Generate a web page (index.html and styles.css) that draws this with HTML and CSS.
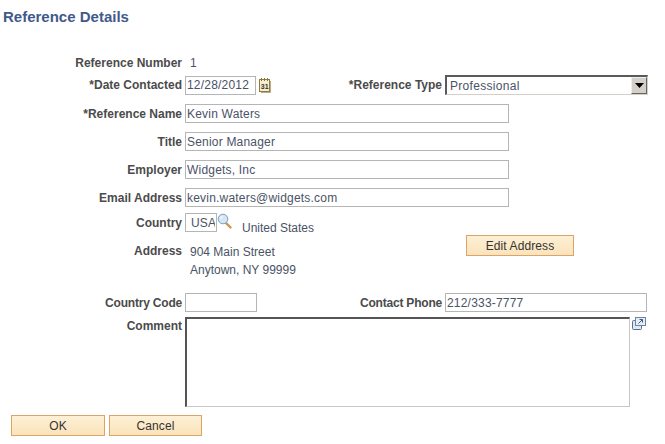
FILE: index.html
```html
<!DOCTYPE html>
<html lang="en">
<head>
    <meta charset="UTF-8">
    <title>Reference Details</title>
    <link rel="stylesheet" href="styles.css">
</head>
<body>
    <h1>Reference Details</h1>

    <div class="row row-number">
        <span class="label">Reference Number</span>
        <span class="value">1</span>
    </div>

    <div class="row split row-date">
        <span class="label">*Date Contacted</span>
        <div class="field-group">
            <input class="input input-date" type="text" value="12/28/2012">
            <svg class="icon-calendar" width="13" height="16" viewBox="0 0 13 16">
                <rect x="1.500" y="2.500" width="10" height="12" fill="#f7efca" stroke="#8d7c48"/>
                <path d="M12.500 4v11.500H3" fill="none" stroke="#bcae7c"/>
                <path d="M3.500 1v3M6.500 1v3M9.500 1v3" stroke="#85743f"/>
                <text x="2.800" y="11.500" class="icon-text">31</text>
            </svg>
        </div>
        <span class="label">*Reference Type</span>
        <div class="select">
            <span>Professional</span>
            <span class="select-arrow">
                <svg width="9" height="5" viewBox="0 0 9 5"><path d="M0 0h9L4.500 5z" fill="#000"/></svg>
            </span>
        </div>
    </div>

    <div class="row row-text">
        <span class="label">*Reference Name</span>
        <input class="input input-wide" type="text" value="Kevin Waters">
    </div>
    <div class="row row-text">
        <span class="label">Title</span>
        <input class="input input-wide" type="text" value="Senior Manager">
    </div>
    <div class="row row-text">
        <span class="label">Employer</span>
        <input class="input input-wide" type="text" value="Widgets, Inc">
    </div>
    <div class="row row-text">
        <span class="label">Email Address</span>
        <input class="input input-wide" type="text" value="kevin.waters@widgets.com">
    </div>

    <div class="row row-country">
        <span class="label label-country">Country</span>
        <input class="input input-country" type="text" value="USA">
        <svg class="icon-search" width="15" height="16" viewBox="0 0 15 16">
            <path d="M9 10l4.500 4.500" stroke="#c9974e" stroke-width="2.400" stroke-linecap="round"/>
            <circle cx="6" cy="6" r="4.800" fill="#d3e6f5" stroke="#7f9db8"/>
            <path d="M3.500 6a2.500 2.500 0 0 1 2.500-2.500" fill="none" stroke="#fff"/>
        </svg>
        <span class="value country-name">United States</span>
    </div>

    <div class="row split-address">
        <span class="label">Address</span>
        <div class="address">
            <div>904 Main Street</div>
            <div>Anytown, NY 99999</div>
        </div>
        <button class="btn btn-edit">Edit Address</button>
    </div>

    <div class="row split row-phone">
        <span class="label label-tight">Country Code</span>
        <div class="field-group">
            <input class="input input-code" type="text">
        </div>
        <span class="label label-tight">Contact Phone</span>
        <input class="input input-phone" type="text" value="212/333-7777">
    </div>

    <div class="row row-comment">
        <span class="label label-comment">Comment</span>
        <textarea class="comment"></textarea>
        <svg class="icon-expand" width="16" height="15" viewBox="0 0 16 15">
            <rect x="1.500" y="4.500" width="9" height="9" rx="1" fill="#dfe8f2" stroke="#5a6f94"/>
            <rect x="4.500" y="1.500" width="10" height="8" fill="#e6eef5" stroke="#6d83ab"/>
            <path d="M7.500 7.500l4-4M8.500 3.500h3v3" fill="none" stroke="#46597c"/>
        </svg>
    </div>

    <div class="actions">
        <button class="btn btn-ok">OK</button>
        <button class="btn btn-cancel">Cancel</button>
    </div>
</body>
</html>
```

FILE: styles.css
```css
body {
    font-family: "Liberation Sans", Arial, sans-serif;
    font-size: 12px;
    color: #4a5266;
    background-color: #fff;
    margin: 0;
}

h1 {
    font-size: 15px;
    font-weight: bold;
    color: #3f5a8a;
    line-height: 16px;
    margin: 0;
    padding: 9px 0 0 3px;
}

.row {
    display: flex;
    column-gap: 3px;
}

.split {
    display: grid;
    grid-template-columns: 182px 160px 94px 1fr;
    column-gap: 3px;
    align-items: center;
}

.label {
    flex: 0 0 182px;
    font-weight: bold;
    color: #4b4b4b;
    text-align: right;
    white-space: nowrap;
}

.label-tight {
    letter-spacing: -0.2px;
}

.value {
    color: #4a5266;
}

.row-number {
    margin-top: 30px;
    line-height: 16px;
}

.row-number .value {
    margin-left: 5px;
}

.row-date {
    margin-top: 4px;
    height: 20px;
}

.row-text {
    margin-top: 9px;
    align-items: center;
}

.row-country {
    margin-top: 6px;
}

.label-country {
    line-height: 20px;
}

.field-group {
    display: flex;
    align-items: center;
}

.input {
    box-sizing: border-box;
    height: 19px;
    border: 1px solid #b5b5b5;
    padding: 0 1px;
    margin: 0;
    font-family: inherit;
    font-size: 12px;
    letter-spacing: 0.2px;
    color: #4a5266;
    background: #fff;
    outline: none;
}

.input-date {
    width: 71px;
}

.input-wide {
    width: 324px;
}

.input-country {
    width: 32px;
    padding-left: 5px;
}

.input-code {
    width: 72px;
}

.input-phone {
    width: 202px;
}

.icon-calendar {
    margin-left: 2px;
}

.icon-text {
    font-size: 7px;
    font-weight: bold;
    fill: #333;
}

.icon-search {
    margin-left: -3px;
    flex: none;
}

.country-name {
    margin: 8px 0 0 7px;
}

.select {
    box-sizing: border-box;
    display: flex;
    justify-content: space-between;
    align-items: center;
    width: 203px;
    height: 20px;
    padding-left: 3px;
    border: 2px solid #5a5a5a;
    border-right-color: #d4d0c8;
    border-bottom-color: #d4d0c8;
    border-right-width: 1px;
    border-bottom-width: 1px;
    color: #4a5266;
    letter-spacing: 0.3px;
}

.select-arrow {
    box-sizing: border-box;
    display: flex;
    align-items: center;
    justify-content: center;
    width: 16px;
    height: 17px;
    background-color: #d4d0c8;
    border: 1px solid #eee;
    border-right-color: #666;
    border-bottom-color: #666;
}

.split-address {
    margin-top: 0;
    height: 61px;
}

.address {
    flex: 0 0 278px;
    padding-left: 5px;
    box-sizing: border-box;
    line-height: 18px;
    padding-top: 8px;
}

.split-address .label {
    line-height: 16px;
    padding-top: 8px;
}

.btn {
    box-sizing: border-box;
    height: 21px;
    padding: 0;
    border: 1px solid #dba56a;
    background: linear-gradient(#fdf0d5, #fbe3bb);
    font-family: inherit;
    font-size: 12px;
    letter-spacing: 0.1px;
    color: #333;
}

.btn-edit {
    width: 108px;
}

.row-phone {
    height: 19px;
    margin-top: -3px;
}

.row-comment {
    margin-top: 5px;
}

.label-comment {
    line-height: 18px;
}

.comment {
    box-sizing: border-box;
    display: block;
    width: 445px;
    height: 90px;
    margin: 0;
    padding: 0;
    border: 2px solid #555;
    border-right: 1px solid #c8c8c0;
    border-bottom: 1px solid #c8c8c0;
    resize: none;
    outline: none;
    background: #fff;
}

.icon-expand {
    margin-left: -2px;
    margin-top: -1px;
}

.actions {
    display: flex;
    column-gap: 4px;
    margin: 8px 0 0 11px;
}

.btn-ok {
    width: 94px;
}

.btn-cancel {
    width: 93px;
}
```
